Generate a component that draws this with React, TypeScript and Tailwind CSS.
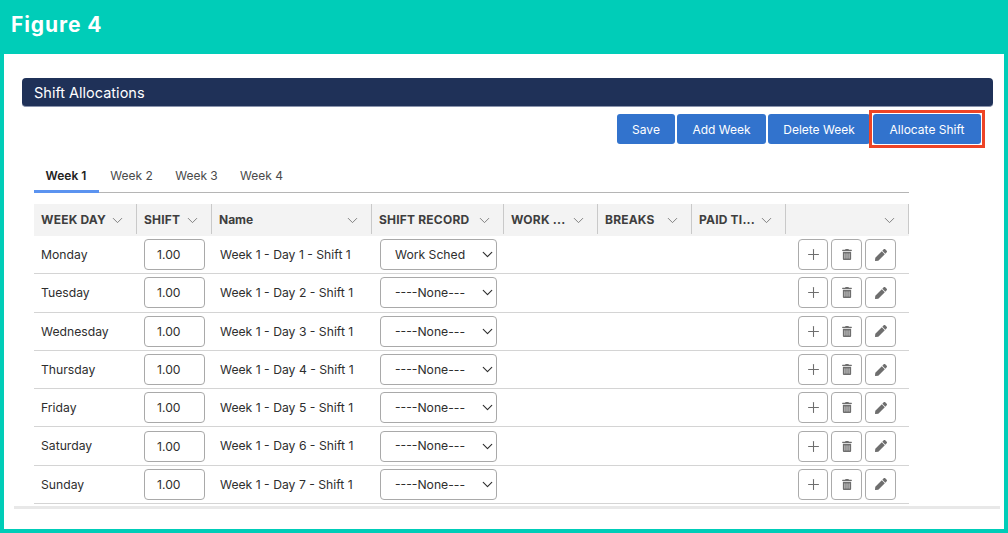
import { ChevronDown, Plus } from "lucide-react";
import { FaPen, FaTrashAlt } from "react-icons/fa";

const days = ["Monday", "Tuesday", "Wednesday", "Thursday", "Friday", "Saturday", "Sunday"];

const columns = [
  { label: "WEEK DAY", width: "w-[103px]" },
  { label: "SHIFT", width: "w-[75px]" },
  { label: "Name", width: "w-[160px]" },
  { label: "SHIFT RECORD", width: "w-[132px]" },
  { label: "WORK ...", width: "w-[94px]" },
  { label: "BREAKS", width: "w-[94px]" },
  { label: "PAID TI...", width: "w-[94px]" },
  { label: "", width: "w-[123px]" },
];

function ActionButton({ children, className }: { children: React.ReactNode; className: string }) {
  return (
    <button className={`h-[31px] flex items-center justify-center rounded-[4px] border border-[#ababab] bg-white text-[#6e6e6e] ${className}`}>
      {children}
    </button>
  );
}

function ToolbarButton({ label, className }: { label: string; className: string }) {
  return (
    <button className={`h-[30px] rounded-[3px] bg-[#3273cd] pt-[2px] text-[12px] text-white ${className}`}>
      {label}
    </button>
  );
}

function Row({ day, index }: { day: string; index: number }) {
  return (
    <div className="flex h-[38.3px] items-center border-b border-[#d4d4d4] text-[12.2px] text-[#2e2e2e]">
      <div className="w-[103px] pl-[7px] pt-[1px]">{day}</div>
      <div className="w-[75px] pl-[7px]">
        <input
          readOnly
          value="1.00"
          className="h-[31px] w-[61px] rounded-[4px] border border-[#a9a9a9] bg-white pl-[12px] text-[12.2px] text-[#2e2e2e]"
        />
      </div>
      <div className="w-[160px] pl-[8px] pt-[1px]">Week 1 - Day {index + 1} - Shift 1</div>
      <div className="w-[132px] pl-[8px]">
        <div className="relative w-[117px]">
          <select className="h-[31px] w-full appearance-none rounded-[4px] border border-[#a9a9a9] bg-white pl-[14px] pr-[31px] pt-[1px] text-[12.2px] text-[#2e2e2e]">
            <option>{index === 0 ? "Work Schedule" : "----None-----"}</option>
          </select>
          <ChevronDown className="pointer-events-none absolute right-[1px] top-[7px] h-[17px] w-[17px] text-[#2e2e2e]" strokeWidth={1.6} />
        </div>
      </div>
      <div className="w-[94px]" />
      <div className="w-[94px]" />
      <div className="w-[94px]" />
      <div className="flex w-[123px] gap-[3px] pl-[12px]">
        <ActionButton className="w-[30px]">
          <Plus className="h-[17px] w-[17px]" strokeWidth={1.5} />
        </ActionButton>
        <ActionButton className="w-[31px]">
          <FaTrashAlt className="h-[11px] w-[10px]" />
        </ActionButton>
        <ActionButton className="w-[31px]">
          <FaPen className="h-[12px] w-[12px]" />
        </ActionButton>
      </div>
    </div>
  );
}

export default function App() {
  return (
    <div className="h-[533px] w-[1008px] overflow-hidden bg-[#00cdb8] font-['Inter',sans-serif]">
      <div className="flex h-[54px] items-start px-[11px] pt-[11px]">
        <h1 className="text-[21px] font-bold leading-[28px] tracking-[0.9px] text-white">
          Figure 4
        </h1>
      </div>

      <div className="mx-[4px] h-[475px] bg-white pt-[24px]">
        <div className="ml-[18px] flex h-[29px] w-[971px] items-center rounded-[4px] border-b border-[#8a94ad] bg-[#1f3158] pl-[12px] pt-[2px] text-[14.5px] text-white">
          Shift Allocations
        </div>

        {/* toolbar */}
        <div className="ml-[613px] mt-[3px] flex h-[38px] w-[368px] items-center">
          <ToolbarButton label="Save" className="w-[58px]" />
          <ToolbarButton label="Add Week" className="ml-[2px] w-[89px]" />
          <ToolbarButton label="Delete Week" className="ml-[2px] w-[102px]" />
          <div className="ml-[-1px] flex h-[38px] w-[116px] items-center justify-center border-[3px] border-[#ee4426]">
            <ToolbarButton label="Allocate Shift" className="w-[108px] shrink-0" />
          </div>
        </div>

        {/* tabs */}
        <div className="ml-[30px] mt-[12px] flex h-[33px] w-[875px] border-b border-[#b5b5b5] text-[12px] text-[#4a4a4a]">
          <div className="h-[33px] w-[65px] border-b-[3px] border-[#5b93f0] pr-[1px] pt-[7px] text-center font-semibold text-[#222]">Week 1</div>
          <div className="w-[65px] pt-[7px] text-center">Week 2</div>
          <div className="w-[65px] pt-[7px] text-center">Week 3</div>
          <div className="w-[65px] pt-[7px] text-center">Week 4</div>
        </div>

        {/* table */}
        <div className="ml-[30px] mt-[11px] w-[875px]">
          <div className="flex h-[32px] bg-[#f3f3f3] text-[#3e3e3e]">
            {columns.map((col, i) => (
              <div
                key={i}
                className={`flex h-[30px] items-center justify-between border-r border-[#c9c9c9] pl-[7px] pr-[10px] pt-[2px] ${col.width} ${col.label === "Name" ? "" : "tracking-[0.2px]"} text-[12px] font-bold`}
              >
                <span className="whitespace-nowrap">{col.label}</span>
                <ChevronDown className="h-[17px] w-[17px] shrink-0 text-[#777]" strokeWidth={1.3} />
              </div>
            ))}
          </div>
          {days.map((day, i) => (
            <Row key={day} day={day} index={i} />
          ))}
        </div>

        <div className="ml-[10px] mt-[2px] h-[3px] w-[986px] bg-[#e8e8e8]" />
      </div>
    </div>
  );
}
